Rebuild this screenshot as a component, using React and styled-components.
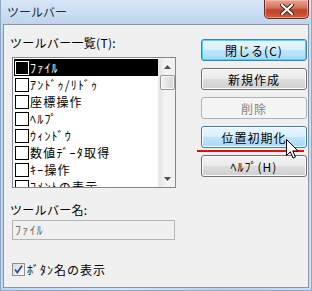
import React from 'react';
import styled, { createGlobalStyle, css } from 'styled-components';

const GlobalStyle = createGlobalStyle`
    html, body {
        margin: 0;
        padding: 0;
        background: #bcd3ec;
    }
    * {
        box-sizing: border-box;
    }
`;

const FONT = `"Noto Sans CJK JP", "Noto Sans", sans-serif`;

const items = [
    'ﾌｧｲﾙ',
    'ｱﾝﾄﾞｩ/ﾘﾄﾞｩ',
    '座標操作',
    'ﾍﾙﾌﾟ',
    'ｳｨﾝﾄﾞｳ',
    '数値ﾃﾞｰﾀ取得',
    'ｷｰ操作',
    'ｺﾒﾝﾄの表示'
];

const buttons = [
    { label: '閉じる(C)', kind: 'default' },
    { label: '新規作成', kind: 'normal' },
    { label: '削除', kind: 'disabled' },
    { label: '位置初期化', kind: 'hover' },
    { label: 'ﾍﾙﾌﾟ(H)', kind: 'normal' }
];

// Dialog window
function App() {
    return (
        <>
            <GlobalStyle />
            <Window>
                <TitleBar>
                    <Title>ツールバー</Title>
                    <CloseButton>
                        <svg width="14" height="11" viewBox="0 0 14 11">
                            <path d="M2 1 L12 10 M12 1 L2 10" stroke="#3a1c16" strokeWidth="4" strokeLinecap="round" />
                            <path d="M2 1 L12 10 M12 1 L2 10" stroke="#ffffff" strokeWidth="2.2" strokeLinecap="round" />
                        </svg>
                    </CloseButton>
                </TitleBar>
                <Client>
                    <LeftColumn>
                        <Label>ツールバー一覧(T):</Label>
                        <ListBox>
                            <ListItems>
                                {items.map((item, index) => (
                                    <Row key={index} selected={index === 0}>
                                        <Box selected={index === 0} />
                                        <span>{item}</span>
                                    </Row>
                                ))}
                            </ListItems>
                            <ScrollBar>
                                <Arrow>
                                    <svg width="7" height="4" viewBox="0 0 7 4"><path d="M0 4 L3.5 0 L7 4 Z" fill="#4d4d4d" /></svg>
                                </Arrow>
                                <Thumb />
                                <Track />
                                <Arrow>
                                    <svg width="7" height="4" viewBox="0 0 7 4"><path d="M0 0 L3.5 4 L7 0 Z" fill="#4d4d4d" /></svg>
                                </Arrow>
                            </ScrollBar>
                        </ListBox>
                        <Label top={14}>ツールバー名:</Label>
                        <TextInput>ﾌｧｲﾙ</TextInput>
                        <CheckRow>
                            <CheckBox>
                                <svg width="11" height="11" viewBox="0 0 11 11">
                                    <path d="M2 5.5 L4.3 8.5 L9 1.8" stroke="#2c4f9e" strokeWidth="1.8" fill="none" />
                                </svg>
                            </CheckBox>
                            <span>ﾎﾞﾀﾝ名の表示</span>
                        </CheckRow>
                    </LeftColumn>
                    <RightColumn>
                        {buttons.map((b, index) => (
                            <Button key={index} kind={b.kind}>{b.label}</Button>
                        ))}
                    </RightColumn>
                </Client>
                <RedLine />
                <Cursor>
                    <svg width="13" height="20" viewBox="0 0 13 20">
                        <path d="M0.5 0.5 L0.5 16.5 L4.3 12.8 L7 19 L9.4 18 L6.8 11.9 L12 11.9 Z" fill="#ffffff" stroke="#000000" strokeWidth="1" strokeLinejoin="miter" />
                    </svg>
                </Cursor>
            </Window>
        </>
    );
}

export default App;

const Window = styled.div`
    position: relative;
    width: 312px;
    height: 291px;
    display: flex;
    flex-direction: column;
    background: linear-gradient(90deg, #c2d7ef 0%, #d4e4f6 40%, #bcd2ec 70%, #c9dcf2 100%);
    border-left: 1px solid #8fa8c6;
    border-right: 1px solid #8fa8c6;
    border-bottom: 1px solid #8fa8c6;
    font-family: ${FONT};
    font-size: 12px;
    color: #000;
`;

const TitleBar = styled.div`
    height: 24px;
    display: flex;
    align-items: flex-start;
    justify-content: space-between;
    padding-left: 6px;
    padding-right: 2px;
    background: linear-gradient(180deg, #d8e6f6 0%, #c9dcf1 60%, #bfd4ec 100%);
`;

const Title = styled.div`
    margin-top: 5px;
    font-size: 12px;
    line-height: 14px;
    color: #1e2a3a;
`;

const CloseButton = styled.div`
    width: 45px;
    height: 19px;
    display: flex;
    align-items: center;
    justify-content: center;
    border: 1px solid #6b2b20;
    border-top: none;
    border-radius: 0 0 5px 5px;
    background: linear-gradient(180deg, #e8a493 0%, #d0705a 45%, #c0422a 55%, #d3583c 100%);
    box-shadow: inset 0 0 0 1px rgba(255, 210, 200, 0.5);
`;

const Client = styled.div`
    flex: 1;
    margin: 0 2px 2px 2px;
    border: 1px solid #8d97a4;
    background: #f0f0f0;
    display: flex;
    padding: 10px 0 0 6px;
`;

const LeftColumn = styled.div`
    width: 170px;
    display: flex;
    flex-direction: column;
`;

const Label = styled.div`
    margin-top: ${(p) => p.top || 0}px;
    height: 15px;
    line-height: 15px;
    letter-spacing: 0.3px;
`;

const ListBox = styled.div`
    margin-top: 7px;
    margin-left: 2px;
    width: 164px;
    height: 131px;
    border: 1px solid #828790;
    background: #fff;
    display: flex;
    overflow: hidden;
`;

const ListItems = styled.div`
    flex: 1;
    padding: 1px 0 0 1px;
    overflow: hidden;
`;

const Row = styled.div`
    height: 17px;
    display: flex;
    align-items: center;
    gap: 1px;
    white-space: nowrap;
    line-height: 17px;
    letter-spacing: 1.2px;
    ${(p) => p.selected && css`
        background: #000;
        color: #fff;
    `}
`;

const Box = styled.div`
    width: 14px;
    height: 14px;
    margin-left: 1px;
    flex: none;
    border: 1px solid ${(p) => (p.selected ? '#fff' : '#000')};
    background: ${(p) => (p.selected ? '#000' : '#fff')};
`;

const ScrollBar = styled.div`
    width: 17px;
    display: flex;
    flex-direction: column;
    align-items: center;
    background: linear-gradient(90deg, #e4e4e4, #f4f4f4 40%, #f0f0f0);
    border-left: 1px solid #ececec;
`;

const Arrow = styled.div`
    height: 17px;
    width: 100%;
    display: flex;
    align-items: center;
    justify-content: center;
`;

const Thumb = styled.div`
    width: 15px;
    height: 15px;
    border: 1px solid #979797;
    border-radius: 2px;
    background: linear-gradient(90deg, #f2f2f2, #e3e3e3 50%, #d6d6d6);
    box-shadow: inset 0 0 0 1px #fafafa;
`;

const Track = styled.div`
    flex: 1;
`;

const TextInput = styled.div`
    margin-top: 3px;
    margin-left: 2px;
    width: 163px;
    height: 20px;
    border: 1px solid #b4b4b4;
    background: #f0f0f0;
    color: #6d6d6d;
    padding-left: 2px;
    line-height: 18px;
    letter-spacing: 1.2px;
`;

const CheckRow = styled.div`
    margin-top: 22px;
    margin-left: 2px;
    display: flex;
    align-items: center;
    gap: 2px;
    height: 15px;
    line-height: 15px;
    letter-spacing: 1px;
`;

const CheckBox = styled.div`
    width: 13px;
    height: 13px;
    border: 1px solid #8e8f8f;
    background: linear-gradient(135deg, #dcdcdc, #f8f8f8);
    display: flex;
    align-items: center;
    justify-content: center;
`;

const RightColumn = styled.div`
    margin-left: 21px;
    padding-top: 4px;
    display: flex;
    flex-direction: column;
    gap: 7px;
`;

const Button = styled.div`
    width: 106px;
    height: 22px;
    border-radius: 3px;
    display: flex;
    align-items: center;
    justify-content: center;
    letter-spacing: 1px;
    border: 1px solid #707070;
    background: linear-gradient(180deg, #f2f2f2 0%, #ebebeb 48%, #dddddd 52%, #cfcfcf 100%);
    box-shadow: inset 0 0 0 1px #fcfcfc;
    ${(p) => p.kind === 'default' && css`
        border-color: #3c7fb1;
        background: linear-gradient(180deg, #eaf6fd 0%, #d9f0fc 48%, #bee6fd 52%, #a7d9f5 100%);
        box-shadow: inset 0 0 0 1px #48d6fb;
    `}
    ${(p) => p.kind === 'hover' && css`
        border-color: #3c7fb1;
        background: linear-gradient(180deg, #eaf6fd 0%, #d9f0fc 48%, #bee6fd 52%, #a7d9f5 100%);
    `}
    ${(p) => p.kind === 'disabled' && css`
        border-color: #adb2b5;
        background: #f4f4f4;
        color: #838383;
        box-shadow: none;
    `}
`;

const RedLine = styled.div`
    position: absolute;
    left: 196px;
    top: 150px;
    width: 107px;
    height: 2px;
    background: #e00e0e;
`;

const Cursor = styled.div`
    position: absolute;
    left: 285px;
    top: 139px;
    width: 13px;
    height: 20px;
    line-height: 0;
`;
